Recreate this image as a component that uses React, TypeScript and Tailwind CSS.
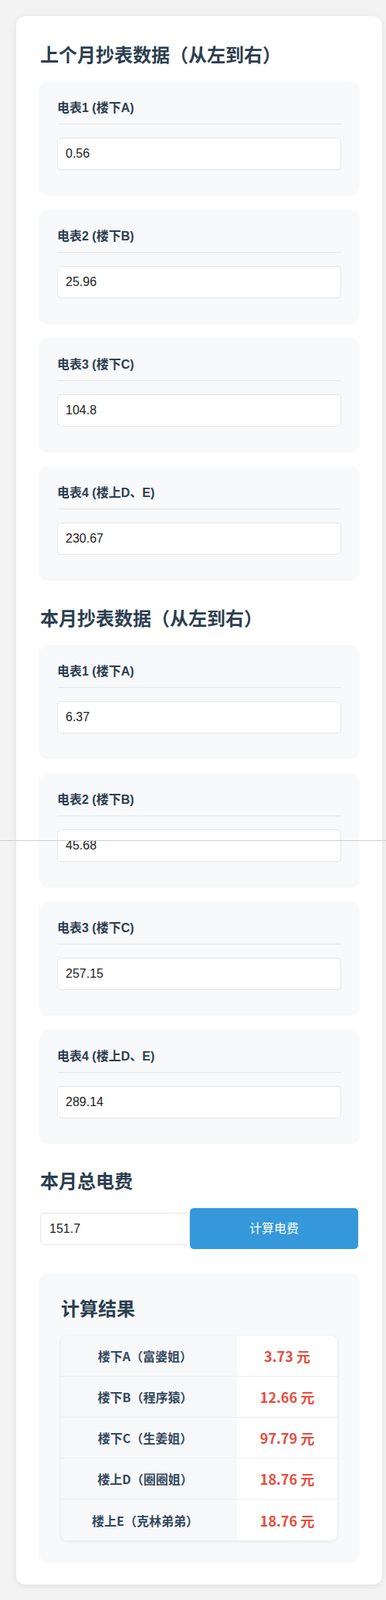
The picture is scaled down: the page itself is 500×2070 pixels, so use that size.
import { useState } from 'react'

type Meter = { id: number; label: string; value: string }

const lastMonth: Meter[] = [
  { id: 1, label: '电表1 (楼下A)', value: '0.56' },
  { id: 2, label: '电表2 (楼下B)', value: '25.96' },
  { id: 3, label: '电表3 (楼下C)', value: '104.8' },
  { id: 4, label: '电表4 (楼上D、E)', value: '230.67' },
]

const thisMonth: Meter[] = [
  { id: 1, label: '电表1 (楼下A)', value: '6.37' },
  { id: 2, label: '电表2 (楼下B)', value: '45.68' },
  { id: 3, label: '电表3 (楼下C)', value: '257.15' },
  { id: 4, label: '电表4 (楼上D、E)', value: '289.14' },
]

const results = [
  { name: '楼下A（富婆姐）', fee: '3.73 元' },
  { name: '楼下B（程序猿）', fee: '12.66 元' },
  { name: '楼下C（生姜姐）', fee: '97.79 元' },
  { name: '楼上D（圈圈姐）', fee: '18.76 元' },
  { name: '楼上E（克林弟弟）', fee: '18.76 元' },
]

function MeterGroup({ meter }: { meter: Meter }) {
  const [value, setValue] = useState(meter.value)
  return (
    <div className="mb-[21px] rounded-[10px] bg-[#f8f9fa] px-[22px] pt-[22px] pb-[31px] shadow-[0_1px_4px_rgba(0,0,0,0.06)]">
      <div className="border-b border-[#e4e7eb] pb-2 text-base leading-6 font-bold text-[#2c3e50]">
        {meter.label}
      </div>
      <input
        type="text"
        value={value}
        onChange={(e) => setValue(e.target.value)}
        className="mt-[17px] block h-[42px] w-full rounded-[5px] border border-[#e6e6e6] bg-white px-[10px] text-base text-[#222] outline-none"
      />
    </div>
  )
}

export default function App() {
  const [total, setTotal] = useState('151.7')

  return (
    <div className="relative min-h-[2070px] bg-[#f3f3f3] pt-[21px] pb-5 font-['Liberation_Sans','Noto_Sans_CJK_SC',sans-serif]">
      <div className="ml-[21px] w-[474px] rounded-xl bg-white px-[31px] pt-[33px] pb-[31px] shadow-[0_2px_10px_rgba(0,0,0,0.08)]">
        <h2 className="mb-4 text-2xl leading-9 font-bold text-[#2c3e50]">上个月抄表数据（从左到右）</h2>
        {lastMonth.map((m) => (
          <MeterGroup key={m.id} meter={m} />
        ))}

        {/* margins collapse with the group's mb-[21px] */}
        <h2 className="mt-[34px] mb-4 text-2xl leading-9 font-bold text-[#2c3e50]">本月抄表数据（从左到右）</h2>
        {thisMonth.map((m) => (
          <MeterGroup key={m.id} meter={m} />
        ))}

        <h2 className="mt-[33px] mb-4 text-2xl leading-9 font-bold text-[#2c3e50]">本月总电费</h2>
        <div className="flex items-center">
          <input
            type="text"
            value={total}
            onChange={(e) => setTotal(e.target.value)}
            className="h-[42px] w-[194px] rounded-[5px] border border-[#e6e6e6] bg-white px-[11px] text-base text-[#222] outline-none"
          />
          <button className="h-[53px] flex-1 rounded-[5px] bg-[#3498db] text-base text-white">计算电费</button>
        </div>

        <div className="mt-8 rounded-[10px] bg-[#f8f9fa] px-[27px] pt-[28px] pb-[26px] shadow-[0_1px_4px_rgba(0,0,0,0.06)]">
          <h2 className="mb-4 text-2xl leading-9 font-bold text-[#2c3e50]">计算结果</h2>
          <div className="overflow-hidden rounded-lg bg-white shadow-[0_1px_4px_rgba(0,0,0,0.1)] font-['Noto_Sans_CJK_SC','Noto_Sans',sans-serif]">
            {results.map((r, i) => (
              <div
                key={r.name}
                className={`flex h-[53px] items-center ${i < results.length - 1 ? 'border-b border-[#eeeeee]' : ''}`}
              >
                <div className="flex h-full w-[228px] items-center justify-center bg-[#f7f8fa] pr-[10px] text-base font-bold text-[#34495e]">
                  {r.name}
                </div>
                <div className="flex h-full flex-1 items-center justify-center text-lg font-bold text-[#e74c3c]">
                  {r.fee}
                </div>
              </div>
            ))}
          </div>
        </div>
      </div>
      <div className="pointer-events-none absolute top-[1087px] left-0 h-px w-full bg-[#cfcfcf]" />
    </div>
  )
}
